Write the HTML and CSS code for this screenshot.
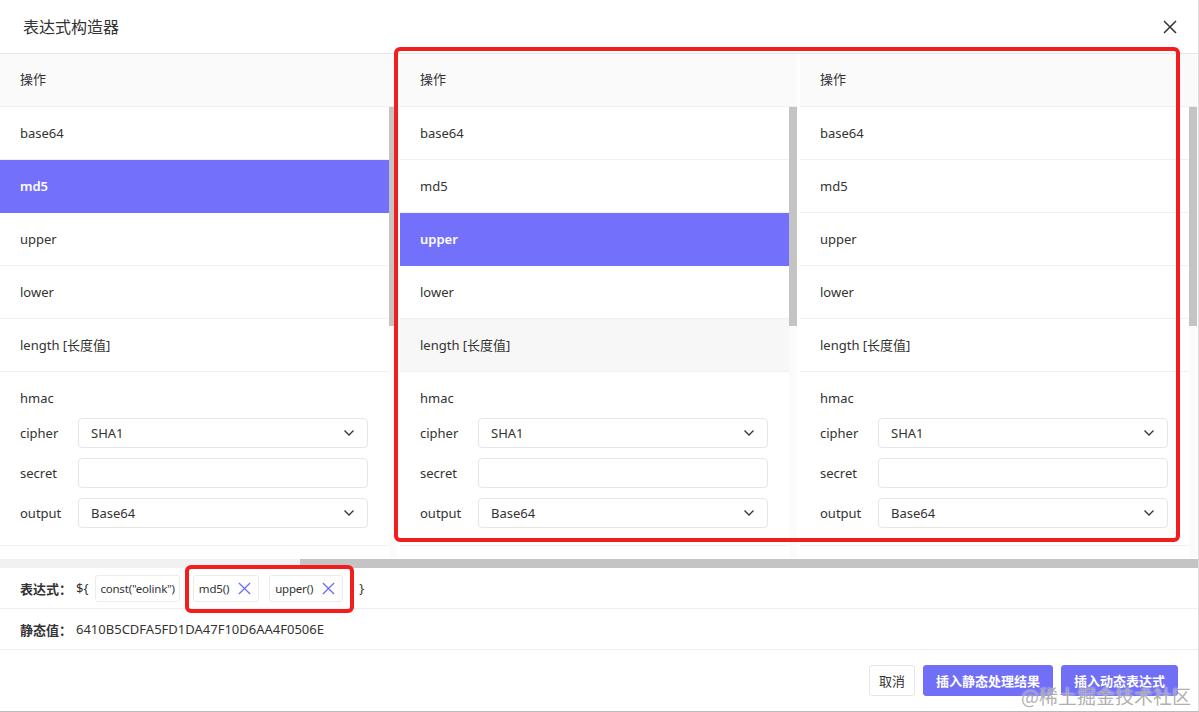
FILE: index.html
```html
<!DOCTYPE html>
<html lang="zh-CN">
<head>
<meta charset="utf-8">
<title>表达式构造器</title>
<link rel="stylesheet" href="styles.css">
</head>
<body>
<div class="dialog">
  <div class="header">
    <div class="title">表达式构造器</div>
    <svg class="close" width="14" height="14" viewBox="0 0 14 14"><path d="M1 1 L13 13 M13 1 L1 13" stroke="#333" stroke-width="1.5" fill="none"/></svg>
  </div>

  <div class="columns">
    <!-- column 1 -->
    <div class="col">
      <div class="col-head">操作</div>
      <div class="col-body">
        <div class="list">
          <div class="row">base64</div>
          <div class="row selected">md5</div>
          <div class="row">upper</div>
          <div class="row">lower</div>
          <div class="row">length [长度值]</div>
          <div class="hmac">
            <div class="hmac-title">hmac</div>
            <div class="field"><span class="flabel">cipher</span><div class="select"><span>SHA1</span><svg width="12" height="8" viewBox="0 0 12 8"><path d="M1.5 1.5 L6 6 L10.5 1.5" stroke="#333" stroke-width="1.3" fill="none"/></svg></div></div>
            <div class="field"><span class="flabel">secret</span><div class="input"></div></div>
            <div class="field"><span class="flabel">output</span><div class="select"><span>Base64</span><svg width="12" height="8" viewBox="0 0 12 8"><path d="M1.5 1.5 L6 6 L10.5 1.5" stroke="#333" stroke-width="1.3" fill="none"/></svg></div></div>
          </div>
        </div>
        <div class="vscroll"><div class="thumb"></div></div>
      </div>
    </div>
    <!-- column 2 -->
    <div class="col">
      <div class="col-head">操作</div>
      <div class="col-body">
        <div class="list">
          <div class="row">base64</div>
          <div class="row">md5</div>
          <div class="row selected">upper</div>
          <div class="row">lower</div>
          <div class="row hover">length [长度值]</div>
          <div class="hmac">
            <div class="hmac-title">hmac</div>
            <div class="field"><span class="flabel">cipher</span><div class="select"><span>SHA1</span><svg width="12" height="8" viewBox="0 0 12 8"><path d="M1.5 1.5 L6 6 L10.5 1.5" stroke="#333" stroke-width="1.3" fill="none"/></svg></div></div>
            <div class="field"><span class="flabel">secret</span><div class="input"></div></div>
            <div class="field"><span class="flabel">output</span><div class="select"><span>Base64</span><svg width="12" height="8" viewBox="0 0 12 8"><path d="M1.5 1.5 L6 6 L10.5 1.5" stroke="#333" stroke-width="1.3" fill="none"/></svg></div></div>
          </div>
        </div>
        <div class="vscroll"><div class="thumb"></div></div>
      </div>
    </div>
    <!-- column 3 -->
    <div class="col">
      <div class="col-head">操作</div>
      <div class="col-body">
        <div class="list">
          <div class="row">base64</div>
          <div class="row">md5</div>
          <div class="row">upper</div>
          <div class="row">lower</div>
          <div class="row">length [长度值]</div>
          <div class="hmac">
            <div class="hmac-title">hmac</div>
            <div class="field"><span class="flabel">cipher</span><div class="select"><span>SHA1</span><svg width="12" height="8" viewBox="0 0 12 8"><path d="M1.5 1.5 L6 6 L10.5 1.5" stroke="#333" stroke-width="1.3" fill="none"/></svg></div></div>
            <div class="field"><span class="flabel">secret</span><div class="input"></div></div>
            <div class="field"><span class="flabel">output</span><div class="select"><span>Base64</span><svg width="12" height="8" viewBox="0 0 12 8"><path d="M1.5 1.5 L6 6 L10.5 1.5" stroke="#333" stroke-width="1.3" fill="none"/></svg></div></div>
          </div>
        </div>
        <div class="vscroll"><div class="thumb"></div></div>
      </div>
    </div>
  </div>

  <div class="hscroll"><div class="htrack"></div><div class="hthumb"></div></div>

  <div class="expr-row">
    <span class="label">表达式：</span>
    <span class="brace">${</span>
    <span class="chip chip-const">const("eolink")</span>
    <span class="chip chip-del">md5()<svg width="13" height="13" viewBox="0 0 14 14"><path d="M1 1 L13 13 M13 1 L1 13" stroke="#6f6cf2" stroke-width="1.4" fill="none"/></svg></span>
    <span class="chip chip-del">upper()<svg width="13" height="13" viewBox="0 0 14 14"><path d="M1 1 L13 13 M13 1 L1 13" stroke="#6f6cf2" stroke-width="1.4" fill="none"/></svg></span>
    <span class="brace-end">}</span>
  </div>

  <div class="static-row">
    <span class="label">静态值：</span>
    <span class="value">6410B5CDFA5FD1DA47F10D6AA4F0506E</span>
  </div>

  <div class="footer">
    <button class="btn">取消</button>
    <button class="btn primary">插入静态处理结果</button>
    <button class="btn primary">插入动态表达式</button>
  </div>

  <div class="mark mark-cols"></div>
  <div class="mark mark-chips"></div>
  <div class="watermark">@稀土掘金技术社区</div>
</div>
</body>
</html>
```

FILE: styles.css
```css
* { box-sizing: border-box; }
html, body { margin: 0; padding: 0; background: #fff; }
body {
  font-family: "Noto Sans", "Noto Sans CJK SC", sans-serif;
  font-size: 13px;
  color: #333;
}
.dialog {
  position: relative;
  width: 1199px;
  height: 712px;
  display: flex;
  flex-direction: column;
  overflow: hidden;
  border-right: 1px solid #ddd;
  border-bottom: 1px solid #bbb;
}
.header {
  height: 54px;
  flex-shrink: 0;
  display: flex;
  align-items: center;
  justify-content: space-between;
  padding: 0 21px 0 23px;
  border-bottom: 1px solid #e8e8e8;
}
.title {
  font-family: "Noto Sans CJK SC", sans-serif;
  font-size: 16px;
  color: #333;
  padding-bottom: 1px;
}
.close { display: block; }

.columns {
  height: 504px;
  flex-shrink: 0;
  display: flex;
  overflow: hidden;
}
.col {
  width: 400px;
  flex-shrink: 0;
  display: flex;
  flex-direction: column;
  padding-right: 3px;
}
.col-head {
  height: 53px;
  flex-shrink: 0;
  background: #fafafa;
  border-bottom: 1px solid #eee;
  display: flex;
  align-items: center;
  padding: 0 0 3px 20px;
  font-family: "Noto Sans CJK SC", sans-serif;
}
.col-body {
  flex: 1;
  display: flex;
  min-height: 0;
}
.list {
  width: 389px;
  flex-shrink: 0;
  overflow: hidden;
}
.row {
  height: 53px;
  display: flex;
  align-items: center;
  padding: 0 0 1px 20px;
  border-bottom: 1px solid #f0f0f0;
  color: #333;
}
.row.selected {
  background: #7371fb;
  color: #fff;
  font-weight: 600;
  border-bottom-color: #7371fb;
}
.row.hover { background: #f7f7f7; }

.hmac {
  padding: 16px 0 17px 20px;
  border-bottom: 1px solid #f0f0f0;
}
.hmac-title {
  height: 20px;
  line-height: 20px;
  margin-bottom: 10px;
}
.field {
  display: flex;
  align-items: center;
  height: 30px;
  margin-bottom: 10px;
}
.field:last-child { margin-bottom: 0; }
.flabel { width: 58px; flex-shrink: 0; }
.select, .input {
  width: 290px;
  height: 30px;
  border: 1px solid #e6e6e6;
  border-radius: 4px;
  background: #fff;
}
.select {
  display: flex;
  align-items: center;
  justify-content: space-between;
  padding: 0 12px 0 12px;
}
.select svg { display: block; }

.vscroll {
  width: 8px;
  flex-shrink: 0;
  background: #fbfbfb;
}
.thumb {
  height: 219px;
  background: #c4c4c4;
}

.hscroll {
  height: 9px;
  flex-shrink: 0;
  display: flex;
  margin-top: 1px;
}
.htrack { width: 300px; background: #f1f1f1; }
.hthumb { flex: 1; background: #c4c4c4; }

.expr-row, .static-row {
  height: 41px;
  flex-shrink: 0;
  display: flex;
  align-items: center;
  padding-left: 20px;
  border-bottom: 1px solid #eee;
}
.label {
  width: 56px;
  font-weight: 700;
  font-family: "Noto Sans CJK SC", sans-serif;
}
.brace { margin-right: 7px; }
.chip {
  height: 27px;
  display: inline-flex;
  align-items: center;
  padding: 0 4px;
  border: 1px solid #ececec;
  border-radius: 3px;
  font-size: 11.5px;
  letter-spacing: -0.2px;
}
.chip-const { margin-right: 13px; }
.chip-del { padding: 0 7px 0 5px; margin-right: 10px; }
.chip-del svg { margin-left: 9px; display: block; }
.brace-end { margin-left: 6px; }
.value { color: #333; }

.footer {
  flex: 1;
  display: flex;
  justify-content: flex-end;
  align-items: flex-start;
  padding: 15px 20px 0 0;
  gap: 8px;
}
.btn {
  height: 31px;
  padding: 0 9px;
  border: 1px solid #e6e6e6;
  border-radius: 3px;
  background: #fff;
  color: #333;
  font-family: "Noto Sans CJK SC", sans-serif;
  font-size: 13px;
}
.btn.primary {
  padding: 0 12px;
  background: #716ff6;
  border-color: #716ff6;
  color: #fff;
  font-weight: 700;
}

.mark {
  position: absolute;
  border: 4px solid #f21e1e;
  border-radius: 6px;
  pointer-events: none;
}
.mark-cols { left: 394px; top: 47px; width: 786px; height: 495px; }
.mark-chips { left: 185px; top: 565px; width: 169px; height: 48px; }

.watermark {
  position: absolute;
  right: 7px;
  bottom: 2px;
  font-family: "Noto Sans CJK SC", sans-serif;
  font-size: 19px;
  color: rgba(140, 140, 140, 0.7);
  text-shadow: 0 0 2px #fff;
}
```
